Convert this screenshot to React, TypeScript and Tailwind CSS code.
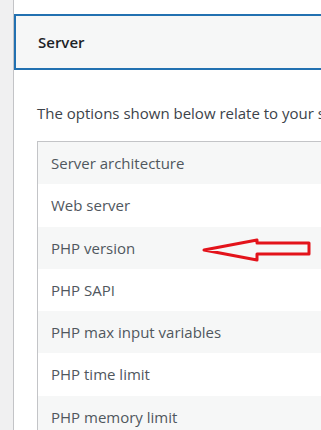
const rows = [
  'Server architecture',
  'Web server',
  'PHP version',
  'PHP SAPI',
  'PHP max input variables',
  'PHP time limit',
  'PHP memory limit',
];

const Arrow = () => (
  <svg className="absolute left-[164px] top-[11px]" width="112" height="24" viewBox="0 0 112 24">
    <path
      d="M2 12 L55 2 L55 5 L107 5 L107 16 L55 16 L55 22 Z"
      fill="none"
      stroke="#e3131b"
      strokeWidth="3"
      strokeLinejoin="round"
    />
  </svg>
);

export default function App() {
  return (
    <div className="flex h-[430px] w-[321px] overflow-hidden bg-white font-['Open_Sans',sans-serif]">
      <div className="w-[14px] shrink-0 border-r border-[#c3c4c7] bg-[#f0f0f1]" />
      <div className="flex min-w-0 flex-1 flex-col pt-[14px]">
        <div className="w-[340px] border-2 border-[#2271b1] bg-[#f6f7f7] px-[22px] py-[15px]">
          <h2 className="text-[15px] font-semibold leading-[22px] text-[#1d2327]">Server</h2>
        </div>
        <div className="pl-[23px]">
          <p className="mt-[32px] whitespace-nowrap text-[15px] leading-[22px] text-[#3c434a]">
            The options shown below relate to your server setup.
          </p>
          <div className="mt-[17px] w-[320px] border border-[#c3c4c7]">
            {rows.map((r, i) => (
              <div
                key={r}
                className={`relative h-[42.3px] px-[13px] text-[15px] leading-[42px] text-[#50575e] ${
                  i % 2 === 0 ? 'bg-[#f6f7f7]' : 'bg-white'
                }`}
              >
                {r}
                {r === 'PHP version' && <Arrow />}
              </div>
            ))}
          </div>
        </div>
      </div>
    </div>
  );
}
